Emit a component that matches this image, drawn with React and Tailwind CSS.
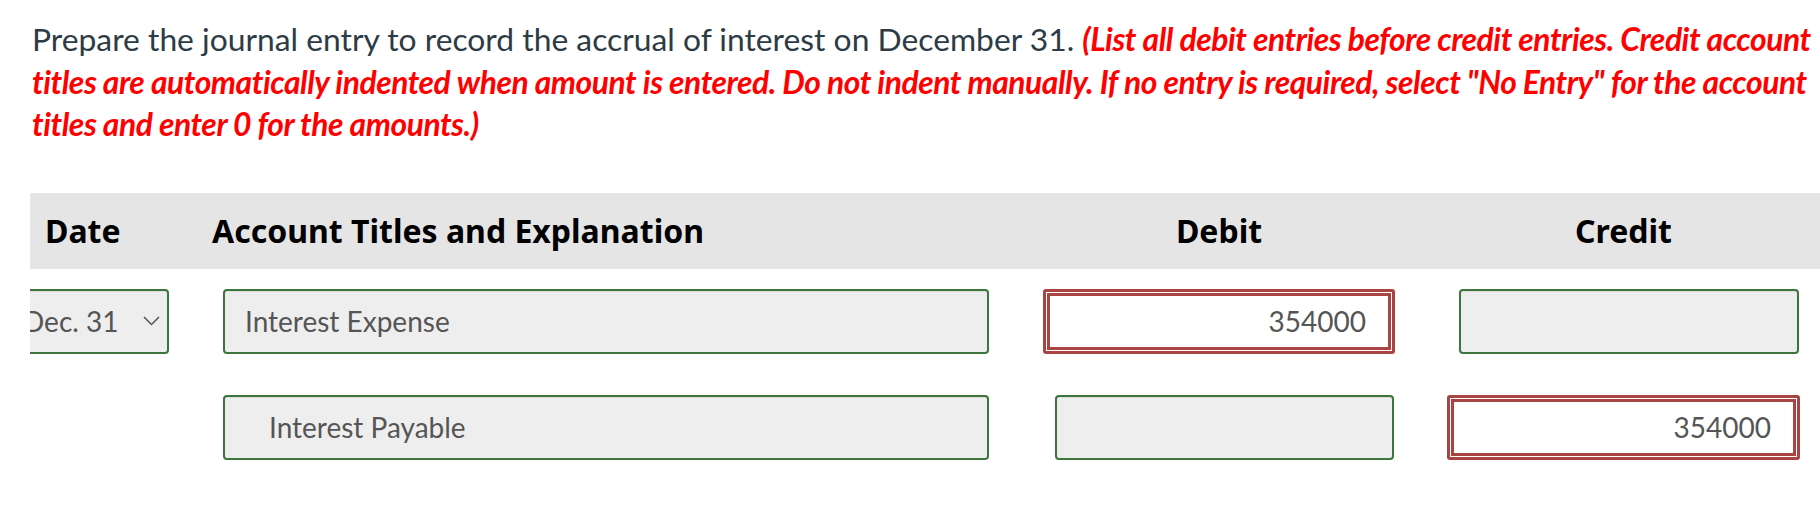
const LATO = { fontFamily: "Lato, 'Open Sans', sans-serif" };
const HEAD = { fontFamily: "'Noto Sans', 'DejaVu Sans', sans-serif" };

/* ─── Inputs ─── */
function GreenBox({ className = "", children }) {
  return (
    <div
      className={`h-[65px] border-2 border-[#3c763d] rounded-[4px] bg-[#eeeeee] shadow-[inset_0_1px_1px_rgba(0,0,0,0.08)] flex items-center text-[28px] text-[#555555] ${className}`}
      style={LATO}
    >
      {children}
    </div>
  );
}

function RedBox({ className = "", value }) {
  return (
    <div
      className={`h-[65px] border-[3px] border-[#a94442] rounded-[3px] bg-white p-[1px] ${className}`}
    >
      <div
        className="h-full border-[3px] border-[#a94442] bg-white flex items-center justify-end pr-[22px] text-[28px] text-[#555555]"
        style={LATO}
      >
        {value}
      </div>
    </div>
  );
}

export default function App() {
  return (
    <div className="w-[1820px] h-[506px] bg-white overflow-hidden">
      {/* Instructions */}
      <p
        className="pt-[18px] pl-[32px] pr-[8px] text-[31.8px] leading-[42.5px] text-[#2d3b45]"
        style={LATO}
      >
        Prepare the journal entry to record the accrual of interest on December
        31.{" "}
        <span className="text-[#ff0000] font-bold italic tracking-[-0.45px]">
          (List all debit entries before credit entries. Credit account titles
          are automatically indented when amount is entered. Do not indent
          manually. If no entry is required, select "No Entry" for the account
          titles and enter 0 for the amounts.)
        </span>
      </p>

      {/* Journal table */}
      <div className="mt-[47px] ml-[30px] overflow-hidden">
        <div
          className="h-[76px] bg-[#e5e5e5] flex items-center text-[32px] font-bold text-black"
          style={HEAD}
        >
          <div className="w-[182px] pl-[15px]">Date</div>
          <div className="w-[831px]">Account Titles and Explanation</div>
          <div className="w-[352px] text-center">Debit</div>
          <div className="w-[52px]" />
          <div className="w-[353px] text-center">Credit</div>
        </div>

        {/* Row 1 */}
        <div className="flex mt-[20px]">
          <div className="w-[193px] shrink-0">
            <GreenBox className="ml-[-21px] w-[160px] pl-[12px] pr-[7px] justify-between">
              <span>Dec. 31</span>
              <svg width="17" height="10" viewBox="0 0 17 10" className="text-[#555555]">
                <polyline
                  points="1,1 8.5,8.5 16,1"
                  fill="none"
                  stroke="currentColor"
                  strokeWidth="1.5"
                />
              </svg>
            </GreenBox>
          </div>
          <GreenBox className="w-[766px] shrink-0 pl-[20px]">
            Interest Expense
          </GreenBox>
          <div className="w-[54px] shrink-0" />
          <RedBox className="w-[352px] shrink-0" value="354000" />
          <div className="w-[52px] shrink-0" />
          <GreenBox className="ml-[12px] w-[340px] shrink-0" />
        </div>

        {/* Row 2 */}
        <div className="flex mt-[41px]">
          <div className="w-[193px] shrink-0" />
          <GreenBox className="w-[766px] shrink-0 pl-[44px]">
            Interest Payable
          </GreenBox>
          <div className="w-[54px] shrink-0" />
          <GreenBox className="ml-[12px] w-[339px] shrink-0" />
          <div className="w-[53px] shrink-0" />
          <RedBox className="w-[353px] shrink-0" value="354000" />
        </div>
      </div>
    </div>
  );
}
